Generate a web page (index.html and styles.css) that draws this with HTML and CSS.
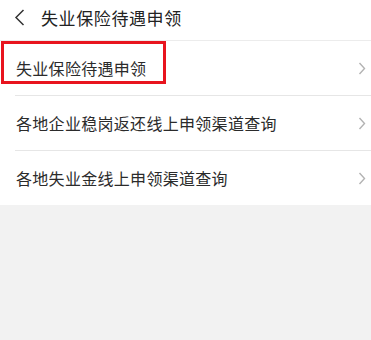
FILE: index.html
```html
<!DOCTYPE html>
<html lang="zh">
<head>
<meta charset="utf-8">
<link rel="stylesheet" href="styles.css">
</head>
<body>
<div class="page">
  <header class="topbar">
    <svg class="back" width="11" height="17" viewBox="0 0 11 17"><path d="M9.5 1 L2 8.5 L9.5 16" fill="none" stroke="#333" stroke-width="1.5"/></svg>
    <span class="title">失业保险待遇申领</span>
  </header>
  <ul class="list">
    <li class="item highlighted"><span class="label">失业保险待遇申领</span><svg class="chev" width="8" height="13" viewBox="0 0 8 13"><path d="M1.5 1 L6.5 6.5 L1.5 12" fill="none" stroke="#b3b3b3" stroke-width="1.4"/></svg><span class="mark"></span></li>
    <li class="item"><span class="label">各地企业稳岗返还线上申领渠道查询</span><svg class="chev" width="8" height="13" viewBox="0 0 8 13"><path d="M1.5 1 L6.5 6.5 L1.5 12" fill="none" stroke="#b3b3b3" stroke-width="1.4"/></svg></li>
    <li class="item"><span class="label">各地失业金线上申领渠道查询</span><svg class="chev" width="8" height="13" viewBox="0 0 8 13"><path d="M1.5 1 L6.5 6.5 L1.5 12" fill="none" stroke="#b3b3b3" stroke-width="1.4"/></svg></li>
  </ul>
</div>
</body>
</html>
```
FILE: styles.css
```css
html, body { margin: 0; padding: 0; }
body {
  width: 371px;
  height: 340px;
  background: #f2f2f2;
  font-family: "Noto Sans CJK SC", "Noto Sans", sans-serif;
  color: #333;
  overflow: hidden;
}
.page { background: #f2f2f2; }
.topbar {
  height: 41px;
  background: #fff;
  display: flex;
  align-items: center;
  padding-left: 14px;
  border-bottom: 1px solid #ececec;
  box-sizing: border-box;
}
.back { margin-right: 16px; margin-top: -5px; }
.title {
  font-size: 17px;
  color: #222;
  letter-spacing: 0.6px;
  margin-top: -6px;
}
.list {
  list-style: none;
  margin: 0;
  padding: 0 0 0 15px;
  background: #fff;
}
.item {
  position: relative;
  height: 55px;
  display: flex;
  align-items: center;
  justify-content: space-between;
  padding-right: 5px;
  border-bottom: 1px solid #e6e6e6;
  box-sizing: border-box;
}
.item:last-child { border-bottom: none; height: 54px; }
.label {
  font-size: 16px;
  color: #2b2b2b;
  letter-spacing: 0.3px;
  padding-left: 1px;
}
.chev { flex: none; }
.mark {
  position: absolute;
  left: -14px;
  top: 0;
  width: 165px;
  height: 43px;
  border: 3px solid #e8141e;
  box-sizing: border-box;
}
```
